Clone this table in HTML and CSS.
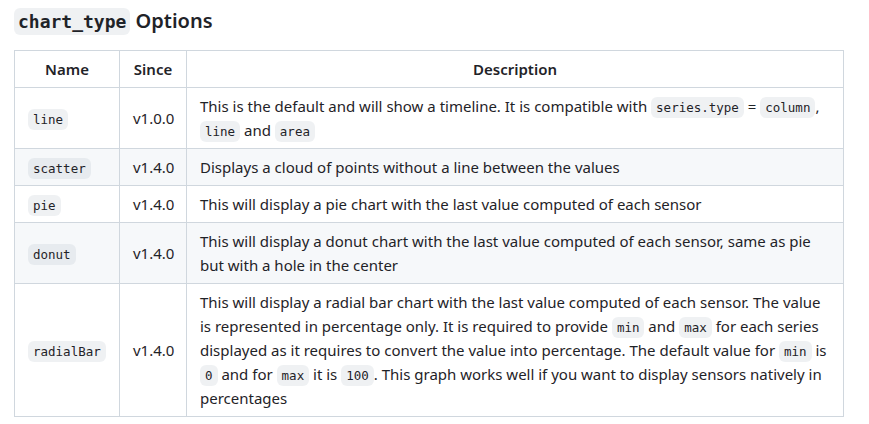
FILE: index.html
```html
<!DOCTYPE html>
<html>
<head>
<meta charset="utf-8">
<link rel="stylesheet" href="styles.css">
</head>
<body>
<div class="markdown">
  <h3 class="title"><code>chart_type</code> Options</h3>
  <table class="opts">
    <colgroup>
      <col class="c-name">
      <col class="c-since">
      <col class="c-desc">
    </colgroup>
    <thead>
      <tr><th>Name</th><th>Since</th><th>Description</th></tr>
    </thead>
    <tbody>
      <tr><td><code>line</code></td><td>v1.0.0</td><td>This is the default and will show a timeline. It is compatible with <code>series.type</code> = <code>column</code>, <code>line</code> and <code>area</code></td></tr>
      <tr><td><code>scatter</code></td><td>v1.4.0</td><td>Displays a cloud of points without a line between the values</td></tr>
      <tr><td><code>pie</code></td><td>v1.4.0</td><td>This will display a pie chart with the last value computed of each sensor</td></tr>
      <tr><td><code>donut</code></td><td>v1.4.0</td><td>This will display a donut chart with the last value computed of each sensor, same as pie but with a hole in the center</td></tr>
      <tr><td><code>radialBar</code></td><td>v1.4.0</td><td>This will display a radial bar chart with the last value computed of each sensor. The value is represented in percentage only. It is required to provide <code>min</code> and <code>max</code> for each series displayed as it requires to convert the value into percentage. The default value for <code>min</code> is <code>0</code> and for <code>max</code> it is <code>100</code>. This graph works well if you want to display sensors natively in percentages</td></tr>
    </tbody>
  </table>
</div>
</body>
</html>
```
FILE: styles.css
```css
html, body {
  margin: 0;
  padding: 0;
  background: #ffffff;
}
.markdown {
  padding: 8px 14px;
  font-family: "Noto Sans", "Open Sans", sans-serif;
  font-size: 15px;
  line-height: 24px;
  color: #1f2328;
}
.title {
  margin: 0 0 16px 0;
  font-size: 20px;
  line-height: 26px;
  font-weight: 600;
}
code {
  font-family: "DejaVu Sans Mono", "Liberation Mono", monospace;
  font-size: 12.5px;
  line-height: 1;
  padding: 3px 5px;
  background: rgba(175, 184, 193, 0.2);
  border-radius: 6px;
}
.title code {
  font-size: 18px;
  padding: 3px 4px;
}
.opts {
  border-collapse: collapse;
  border-spacing: 0;
  width: 830px;
  table-layout: fixed;
}
.c-name { width: 105px; }
.c-since { width: 67px; }
.opts th, .opts td {
  border: 1px solid #d0d7de;
  padding: 6px 13px;
  vertical-align: middle;
}
.opts th {
  font-weight: 600;
  text-align: center;
}
.opts tbody tr:nth-child(2n) {
  background: #f6f8fa;
}
```
